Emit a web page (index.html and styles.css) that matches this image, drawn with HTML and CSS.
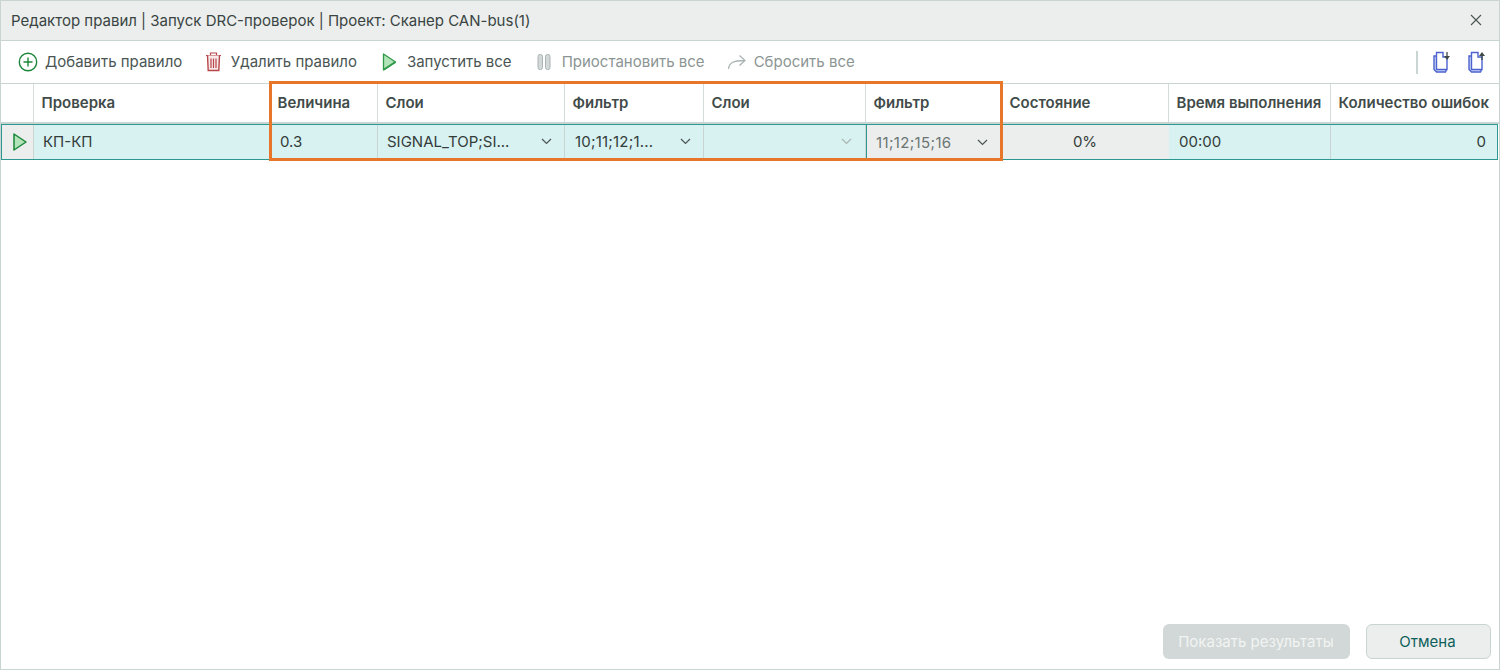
FILE: index.html
```html
<!DOCTYPE html>
<html lang="ru">
<head>
<meta charset="utf-8">
<title>Редактор правил</title>
<link rel="stylesheet" href="styles.css">
</head>
<body>
<div class="dialog">
  <div class="titlebar">
    <span class="title">Редактор правил | Запуск DRC-проверок | Проект: Сканер CAN-bus(1)</span>
    <svg class="close" width="12" height="12" viewBox="0 0 12 12"><path d="M1 1l10 10M11 1L1 11" stroke="#4a5553" stroke-width="1.1" fill="none"/></svg>
  </div>
  <div class="toolbar">
    <button class="tool t-add">
      <svg width="20" height="20" viewBox="0 0 20 20"><circle cx="10" cy="10" r="8.700" fill="none" stroke="#1a8638" stroke-width="1.400"/><path d="M10 5.500v9M5.500 10h9" stroke="#1a8638" stroke-width="1.400"/></svg>
      <span>Добавить правило</span>
    </button>
    <button class="tool t-del">
      <svg width="17" height="21" viewBox="0 0 17 21"><path d="M1 4.500h15M5.500 4.500V2h6v2.500" fill="none" stroke="#b7474a" stroke-width="1.200"/><path d="M2.500 4.500l.7 15h10.600l.7-15" fill="#f8e9e9" stroke="#b7474a" stroke-width="1.400"/><path d="M6 7.500v9.500M8.500 7.500v9.500M11 7.500v9.500" stroke="#b7474a" stroke-width="1.200"/></svg>
      <span>Удалить правило</span>
    </button>
    <button class="tool t-run">
      <svg width="15" height="20" viewBox="0 0 15 20"><path d="M1.500 2l12 8-12 8z" fill="#b3e3b8" stroke="#2f9a4a" stroke-width="1.300" stroke-linejoin="round"/><path d="M2 17.500l11.500-7.500" stroke="#2f9a4a" stroke-width="1.800"/></svg>
      <span>Запустить все</span>
    </button>
    <button class="tool t-pause off">
      <svg width="14" height="18" viewBox="0 0 14 18"><rect x="1" y="1.500" width="4.500" height="15" rx="2" fill="#d3d9d8" stroke="#aab4b2"/><rect x="8.500" y="1.500" width="4.500" height="15" rx="2" fill="#d3d9d8" stroke="#aab4b2"/></svg>
      <span>Приостановить все</span>
    </button>
    <button class="tool t-reset off">
      <svg width="20" height="16" viewBox="0 0 20 16"><path d="M1.500 15C2 9 6 6.500 17.500 6.500M12.500 1.500l5.500 5-5.500 5" fill="none" stroke="#aab4b2" stroke-width="1.300"/></svg>
      <span>Сбросить все</span>
    </button>
    <span class="spacer"></span>
    <span class="divider"></span>
    <svg class="doc doc-down" width="17" height="22" viewBox="0 0 17 22"><path d="M4 5H1v13.500L3.500 21h9l1-2.500" fill="#cdd6f4" stroke="#4c63cf" stroke-width="1.400"/><path d="M3.500 1.500H10V6h4v12.500H3.500z" fill="#fff" stroke="#4c63cf" stroke-width="1.400"/><path d="M14 1v5" stroke="#3f4a48" stroke-width="1.300"/><path d="M11 5h6l-3 4z" fill="#3f4a48"/></svg>
    <svg class="doc doc-up" width="17" height="22" viewBox="0 0 17 22"><path d="M4 5H1v13.500L3.500 21h9l1-2.500" fill="#cdd6f4" stroke="#4c63cf" stroke-width="1.400"/><path d="M3.500 1.500H10V6h4v12.500H3.500z" fill="#fff" stroke="#4c63cf" stroke-width="1.400"/><path d="M14 4v5" stroke="#3f4a48" stroke-width="1.300"/><path d="M11 5h6l-3-4z" fill="#3f4a48"/></svg>
  </div>

  <div class="table">
    <div class="head">
      <div class="hc"></div>
      <div class="hc">Проверка</div>
      <div class="hc">Величина</div>
      <div class="hc">Слои</div>
      <div class="hc">Фильтр</div>
      <div class="hc">Слои</div>
      <div class="hc">Фильтр</div>
      <div class="hc">Состояние</div>
      <div class="hc">Время выполнения</div>
      <div class="hc last">Количество ошибок</div>
    </div>
    <div class="row">
      <div class="c c-run">
        <svg width="16" height="20" viewBox="0 0 16 20"><path d="M2 2l12 8-12 8z" fill="#b3e3b8" stroke="#1a8638" stroke-width="1.500" stroke-linejoin="round"/></svg>
      </div>
      <div class="c c-name">КП-КП</div>
      <div class="c c-val">0.3</div>
      <div class="c c-sel"><span>SIGNAL_TOP;SI...</span><svg class="chev" width="11" height="7" viewBox="0 0 11 7"><path d="M1 1l4.500 4.500L10 1" fill="none" stroke="#4a5553" stroke-width="1.200"/></svg></div>
      <div class="c c-sel c-pad"><span>10;11;12;1...</span><svg class="chev" width="11" height="7" viewBox="0 0 11 7"><path d="M1 1l4.500 4.500L10 1" fill="none" stroke="#4a5553" stroke-width="1.200"/></svg></div>
      <div class="c c-sel c-empty"><span></span><svg class="chev" width="11" height="7" viewBox="0 0 11 7"><path d="M1 1l4.500 4.500L10 1" fill="none" stroke="#aab4b2" stroke-width="1.200"/></svg></div>
      <div class="c c-sel c-dis"><span>11;12;15;16</span><svg class="chev" width="11" height="7" viewBox="0 0 11 7"><path d="M1 1l4.500 4.500L10 1" fill="none" stroke="#4a5553" stroke-width="1.200"/></svg></div>
      <div class="c c-state">0%</div>
      <div class="c c-time">00:00</div>
      <div class="c c-err">0</div>
    </div>
    <div class="highlight"></div>
  </div>

  <div class="footer">
    <button class="btn btn-show">Показать результаты</button>
    <button class="btn btn-cancel">Отмена</button>
  </div>
</div>
</body>
</html>
```
FILE: styles.css
```css
* { box-sizing: border-box; }
html, body { margin: 0; height: 100%; background: #fff; overflow: hidden; }
body { font-family: Inter, "Noto Sans", sans-serif; font-size: 15px; color: #3c4644; }
.dialog { width: 1500px; height: 670px; border: 1px solid #c9d5d3; display: flex; flex-direction: column; background: #fff; }

.titlebar { height: 40px; flex: none; background: #ebeeed; border-bottom: 1px solid #c9d5d3; display: flex; align-items: center; justify-content: space-between; padding: 0 10px 0 10px; }
.title { color: #3a4442; margin-top: -1px; }
.close { margin-right: 7px; margin-top: -1px; }

.toolbar { height: 43px; flex: none; display: flex; align-items: center; border-bottom: 1px solid #c9d5d3; padding-left: 17px; padding-right: 14px; }
.tool { display: flex; align-items: center; border: 0; background: none; padding: 0; font: inherit; color: #4a5553; margin-top: -1px; }
.tool.off { color: #8b9593; }
.t-add svg { margin-right: 7px; }
.t-del { margin-left: 22.500px; }
.t-del svg { margin-right: 9px; }
.t-run { margin-left: 25px; }
.t-run svg { margin-right: 10px; }
.t-pause { margin-left: 25px; }
.t-pause svg { margin-right: 11px; }
.t-reset { margin-left: 22px; }
.t-reset svg { margin-right: 7px; }
.spacer { flex: 1; }
.divider { width: 2px; height: 23px; background: #c9d5d3; margin-right: 15px; }
.doc-up { margin-left: 18px; }

.table { flex: none; position: relative; }
.head { display: grid; grid-template-columns: 33px 236px 108px 187px 139px 162px 136px 167px 162px 168px; height: 40px; border-bottom: 2px solid #c9d5d3; }
.hc { display: flex; align-items: center; padding: 0 0 2px 7.500px; font-weight: 600; color: #414b49; border-right: 1px solid #d3dcda; white-space: nowrap; }
.hc.last { border-right: 0; }

.row { display: grid; grid-template-columns: 32px 236px 108px 187px 139px 162px 136px 167px 162px 166px; height: 36px; width: 1497px; background: #d8f2f1; border: 1px solid #2d9792; }
.c { display: flex; align-items: center; padding: 0 0 1px 9px; border-right: 1px solid #c9d5d3; color: #333c3a; white-space: nowrap; min-width: 0; }
.c-run { background: #ebeeed; padding-left: 10px; }
.c-val { padding-left: 10px; }
.c-sel { justify-content: space-between; padding-right: 12px; }
.c-pad { padding-left: 10px; letter-spacing: 0.2px; }
.c-empty { padding-right: 13px; }
.c-dis { background: #ebeeed; color: #6b7573; border-left: 1px solid #2d9792; border-right: 0; padding-left: 9px; padding-right: 14px; padding-top: 1px; letter-spacing: 0.35px; }
.c-state { background: #ebeeed; justify-content: center; padding-left: 0; border-right: 0; padding-right: 1px; }
.c-time { padding-left: 10px; }
.c-err { justify-content: flex-end; padding-right: 11px; border-right: 0; }

.highlight { position: absolute; left: 268px; top: -3px; width: 734px; height: 80px; border: 3px solid #e8762a; pointer-events: none; }

.footer { margin-top: auto; display: flex; justify-content: flex-end; gap: 16px; padding: 0 8px 10px 0; }
.btn { height: 35px; border-radius: 6px; font: inherit; padding: 0; }
.btn-show { width: 187px; background: #d2d8d7; color: #f1f4f3; border: 0; padding-right: 1px; }
.btn-cancel { width: 125px; background: #ebeeed; border: 1px solid #c9d5d3; color: #0d5f5c; padding-right: 2px; }
```
